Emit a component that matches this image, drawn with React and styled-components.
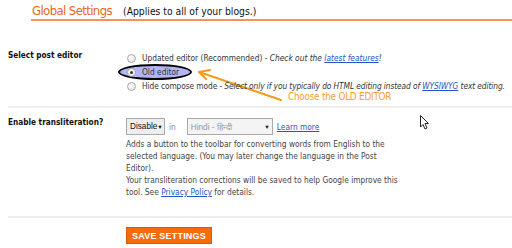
import React from "react";
import styled, { createGlobalStyle } from "styled-components";

const Global = createGlobalStyle`
  html, body { margin: 0; padding: 0; background: #fff; }
  body {
    width: 512px; height: 248px; overflow: hidden;
    font-family: "DejaVu Sans Condensed", "DejaVu Sans", sans-serif;
    color: #333;
  }
`;

const Page = styled.div`
  position: relative;
  width: 512px;
  height: 248px;
  padding-top: 3px;
  box-sizing: border-box;
`;

const Header = styled.div`
  margin-left: 31px;
  display: flex;
  align-items: baseline;
  gap: 11px;
  padding-left: 1px;
  height: 16px;
  border-bottom: 2px solid #f9915a;
`;

const Title = styled.h1`
  margin: 0;
  font-size: 13px;
  letter-spacing: -0.6px;
  font-weight: normal;
  color: #e8661c;
  line-height: 16px;
`;

const Sub = styled.span`
  font-size: 10.3px;
  color: #111;
`;

const Row = styled.div`
  display: grid;
  grid-template-columns: 118px 1fr;
  padding-left: 8px;
  padding-top: ${(p) => p.$top}px;
  padding-bottom: ${(p) => p.$bottom}px;
`;

const Label = styled.div`
  font-size: 8.2px;
  font-weight: bold;
  color: #111;
  margin-top: ${(p) => p.$offset || 0}px;
  line-height: 12px;
`;

const Divider = styled.div`
  height: 2px;
  margin-left: 8px;
  background: #eeeeee;
`;

const Options = styled.div`
  display: flex;
  flex-direction: column;
  margin-top: 2px;
`;

const Option = styled.div`
  position: relative;
  display: flex;
  align-items: center;
  height: 14px;
  font-size: 8.3px;
  letter-spacing: ${(p) => p.$tight ? "-0.09px" : "0"};
  color: #333;
  white-space: nowrap;
`;

const Radio = styled.span`
  position: relative;
  z-index: 1;
  width: 7px;
  height: 7px;
  border-radius: 50%;
  border: 1px solid #aaa;
  background: radial-gradient(circle at 40% 35%, #fff, #ddd);
  margin: 0 6px 0 1px;
  flex: none;
  &::after {
    content: "";
    display: ${(p) => (p.$checked ? "block" : "none")};
    position: absolute;
    left: 2px; top: 2px;
    width: 3px; height: 3px; border-radius: 50%;
    background: #333;
  }
`;

const OptText = styled.span`
  position: relative;
  z-index: 1;
`;

const Ellipse = styled.span`
  position: absolute;
  left: -8px;
  top: -1px;
  width: 70px;
  height: 12px;
  border: 2px solid #000;
  border-radius: 50%;
  background: #b4b4f8;
`;

const Note = styled.i`
  color: #333;
`;

const Link = styled.a`
  color: #2255cc;
  text-decoration: underline;
`;

const Callout = styled.div`
  position: absolute;
  left: 288px;
  top: 91px;
  font-size: 9.8px;
  letter-spacing: -0.2px;
  color: #f8a030;
  white-space: nowrap;
`;

const Controls = styled.div`
  display: flex;
  align-items: center;
  font-size: 8.3px;
  height: 17px;
`;

const Select = styled.div`
  display: flex;
  align-items: center;
  justify-content: space-between;
  box-sizing: border-box;
  width: ${(p) => p.$w}px;
  height: 17px;
  margin-right: ${(p) => p.$mr}px;
  border: 1px solid #aaa;
  background: ${(p) => (p.$disabled ? "#f4f4f4" : "#eee")};
  color: ${(p) => (p.$disabled ? "#999" : "#111")};
  font-family: "Liberation Sans", Arial, sans-serif;
  font-size: 8.2px;
  padding: 0 2px 0 3px;
  white-space: nowrap;
`;

const Caret = styled.span`
  font-size: 5.5px;
  color: #111;
`;

const In = styled.span`
  color: #888;
  margin-right: 11px;
`;

const Desc = styled.div`
  font-size: 8.3px;
  line-height: 12px;
  color: #444;
  margin-top: 3px;
  white-space: nowrap;
`;

const SaveButton = styled.button`
  margin: 9px 0 0 126px;
  display: block;
  width: 86px;
  height: 17px;
  padding: 0;
  background: #f66b0c;
  border: 1px solid #d75a05;
  color: #fff;
  font-family: "Liberation Sans", Arial, sans-serif;
  font-weight: bold;
  font-size: 9px;
  letter-spacing: 0.2px;
`;

const Overlay = styled.svg`
  position: absolute;
  left: 0;
  top: 0;
  pointer-events: none;
`;

export default function App() {
  return (
    <Page>
      <Global />
      <Header>
        <Title>Global Settings</Title>
        <Sub>(Applies to all of your blogs.)</Sub>
      </Header>
      <Row $top={28} $bottom={13}>
        <Label>Select post editor</Label>
        <Options>
          <Option>
            <Radio />
            <OptText>
              Updated editor (Recommended) - <Note>Check out the <Link>latest features</Link>!</Note>
            </OptText>
          </Option>
          <Option>
            <Ellipse />
            <Radio $checked />
            <OptText>Old editor</OptText>
          </Option>
          <Option $tight>
            <Radio />
            <OptText>
              Hide compose mode - <Note>Select only if you typically do HTML editing instead of <Link>WYSIWYG</Link> text editing.</Note>
            </OptText>
          </Option>
        </Options>
      </Row>
      <Callout>Choose the OLD EDITOR</Callout>
      <Divider />
      <Row $top={10} $bottom={18}>
        <Label $offset={-2}>Enable transliteration?</Label>
        <div>
          <Controls>
            <Select $w={39} $mr={4}>Disable <Caret>▼</Caret></Select>
            <In>in</In>
            <Select $w={86} $mr={4} $disabled>Hindi - हिन्दी <Caret>▼</Caret></Select>
            <Link>Learn more</Link>
          </Controls>
          <Desc>
            Adds a button to the toolbar for converting words from English to the
            <br />
            selected language. (You may later change the language in the Post
            <br />
            Editor).
            <br />
            Your transliteration corrections will be saved to help Google improve this
            <br />
            tool. See <Link>Privacy Policy</Link> for details.
          </Desc>
        </div>
      </Row>
      <Divider />
      <SaveButton>SAVE SETTINGS</SaveButton>
      <Overlay width="512" height="248" viewBox="0 0 512 248">
        <g stroke="#f59a1e" strokeWidth="2" fill="none" strokeLinecap="round">
          <line x1="281" y1="100" x2="199" y2="72" />
          <line x1="199" y1="72" x2="210" y2="70" />
          <line x1="199" y1="72" x2="206" y2="79" />
        </g>
        <path d="M420.5 115.5 L420.5 127 L423 124.5 L425 129 L427 128 L425 123.5 L428.5 123.5 Z" fill="#fff" stroke="#222" strokeWidth="1" />
      </Overlay>
    </Page>
  );
}
